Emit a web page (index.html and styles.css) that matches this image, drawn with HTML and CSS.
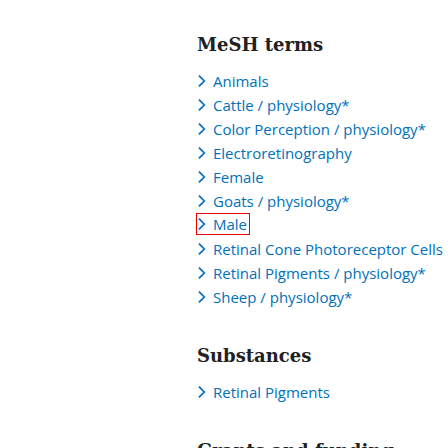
FILE: index.html
```html
<!DOCTYPE html>
<html>
<head>
<meta charset="utf-8">
<link rel="stylesheet" href="styles.css">
</head>
<body>
<div class="page">
  <section class="sec">
    <h2 class="title">MeSH terms</h2>
    <ul class="list">
      <li class="row"><a class="item"><svg class="chev" viewBox="0 0 8 12" width="8" height="12"><polyline points="1.5,1.2 6.3,6 1.5,10.8"/></svg><span>Animals</span></a></li>
      <li class="row"><a class="item"><svg class="chev" viewBox="0 0 8 12" width="8" height="12"><polyline points="1.5,1.2 6.3,6 1.5,10.8"/></svg><span>Cattle / physiology*</span></a></li>
      <li class="row"><a class="item"><svg class="chev" viewBox="0 0 8 12" width="8" height="12"><polyline points="1.5,1.2 6.3,6 1.5,10.8"/></svg><span>Color Perception / physiology*</span></a></li>
      <li class="row"><a class="item"><svg class="chev" viewBox="0 0 8 12" width="8" height="12"><polyline points="1.5,1.2 6.3,6 1.5,10.8"/></svg><span>Electroretinography</span></a></li>
      <li class="row"><a class="item"><svg class="chev" viewBox="0 0 8 12" width="8" height="12"><polyline points="1.5,1.2 6.3,6 1.5,10.8"/></svg><span>Female</span></a></li>
      <li class="row"><a class="item"><svg class="chev" viewBox="0 0 8 12" width="8" height="12"><polyline points="1.5,1.2 6.3,6 1.5,10.8"/></svg><span>Goats / physiology*</span></a></li>
      <li class="row"><a class="item focus"><svg class="chev" viewBox="0 0 8 12" width="8" height="12"><polyline points="1.5,1.2 6.3,6 1.5,10.8"/></svg><span>Male</span></a></li>
      <li class="row"><a class="item"><svg class="chev" viewBox="0 0 8 12" width="8" height="12"><polyline points="1.5,1.2 6.3,6 1.5,10.8"/></svg><span>Retinal Cone Photoreceptor Cells</span></a></li>
      <li class="row"><a class="item"><svg class="chev" viewBox="0 0 8 12" width="8" height="12"><polyline points="1.5,1.2 6.3,6 1.5,10.8"/></svg><span>Retinal Pigments / physiology*</span></a></li>
      <li class="row"><a class="item"><svg class="chev" viewBox="0 0 8 12" width="8" height="12"><polyline points="1.5,1.2 6.3,6 1.5,10.8"/></svg><span>Sheep / physiology*</span></a></li>
    </ul>
  </section>
  <section class="sec">
    <h2 class="title">Substances</h2>
    <ul class="list">
      <li class="row"><a class="item"><svg class="chev" viewBox="0 0 8 12" width="8" height="12"><polyline points="1.5,1.2 6.3,6 1.5,10.8"/></svg><span>Retinal Pigments</span></a></li>
    </ul>
  </section>
  <section class="sec last">
    <h2 class="title">Grants and funding</h2>
  </section>
</div>
</body>
</html>
```
FILE: styles.css
```css
html, body { margin: 0; padding: 0; background: #fff; width: 448px; height: 448px; overflow: hidden; }
.page { padding: 30px 0 0 197px; width: 251px; height: 418px; overflow: hidden; }
.sec { margin-bottom: 32px; }
.last { margin-bottom: 0; }
.title {
  font-family: "DejaVu Serif", serif;
  font-weight: bold;
  font-size: 18px;
  color: #212121;
  margin: 0 0 9px 0;
  line-height: 30px;
  white-space: nowrap;
}
.list { list-style: none; margin: 0; padding: 0; }
.row { display: flex; height: 24px; }
.item {
  display: flex;
  align-items: center;
  gap: 7px;
  height: 24px;
  padding-left: 1px;
  font-family: "Open Sans", sans-serif;
  font-size: 15px;
  line-height: 24px;
  color: #0071bc;
  white-space: nowrap;
}
.chev { display: block; flex: none; }
.chev polyline { fill: none; stroke: #0071bc; stroke-width: 1.7; stroke-linecap: square; stroke-linejoin: miter; }
.focus { outline: 1px solid #e00; outline-offset: -1px; height: 22px; margin-left: -1px; padding-left: 2px; padding-right: 3px; }
```
